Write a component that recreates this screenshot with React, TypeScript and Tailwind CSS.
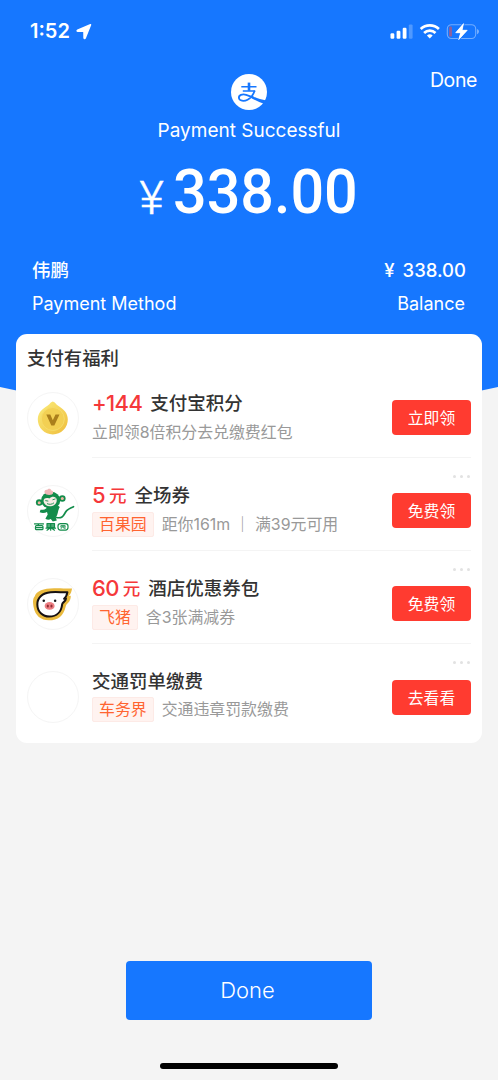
import type { ReactNode } from "react";

function AlipayLogo() {
  return (
    <svg width="36" height="36" viewBox="0 0 36 36" fill="none">
      <circle cx="18" cy="18" r="18" fill="#fff" />
      <g stroke="#1677ff">
        <path d="M18 8.600v8.200" strokeWidth="2.600" />
        <path d="M10.300 12.800h15.200M11.800 17h12.400" strokeWidth="1.600" />
        <path d="M23.600 16.800c-1.300 4.200-4 7.300-7 8.900-3.600 1.900-8.300 1.400-8.700-1.700-.3-2.900 3.300-4.200 7.200-3.200 3 .8 5.200 1.900 8 3.100" strokeWidth="1.800" />
      </g>
      <path d="M21 21.900c4.500 2.300 9 3.600 14.500 4.700-.5 1.400-.9 2-1.800 3.300-5-1.600-9.200-3.700-14-6.200z" fill="#1677ff" />
    </svg>
  );
}

function StatusIcons() {
  return (
    <svg width="90" height="20" viewBox="0 0 90 20" fill="none">
      <rect x="0.5" y="12.3" width="3.8" height="5.4" rx="1.2" fill="#fff" />
      <rect x="6.6" y="9.8" width="3.8" height="7.9" rx="1.2" fill="#fff" />
      <rect x="12.7" y="6.8" width="3.8" height="10.9" rx="1.2" fill="#fff" />
      <rect x="18.8" y="3.4" width="3.8" height="14.3" rx="1.2" fill="#fff" opacity="0.25" />
      <g stroke="#fff" strokeWidth="2.7">
        <path d="M30.700 8a13 13 0 0 1 18.200 0" />
        <path d="M34.100 12a8.200 8.200 0 0 1 11.400 0" />
      </g>
      <path d="M36.900 14.500a4.300 4.300 0 0 1 5.800 0L39.800 17.500z" fill="#fff" />
      <rect x="57.3" y="3.7" width="28.4" height="13.8" rx="4.2" stroke="#fff" strokeOpacity="0.4" strokeWidth="1.1" />
      <path d="M87.2 8v5.2c1-.4 1.6-1.4 1.6-2.6s-.6-2.2-1.6-2.6z" fill="#fff" opacity="0.5" />
      <rect x="59" y="5.6" width="3" height="10" rx="1.2" fill="#8a619f" />
      <path d="M73.600 2.500 65.600 11.800h5L68.600 18.800 77.300 9.200h-5.200z" fill="#fff" stroke="#1677ff" strokeWidth="2" strokeLinejoin="round" paintOrder="stroke" />
      <path d="M73.600 2.500 65.600 11.800h5L68.600 18.800 77.300 9.200h-5.200z" fill="#fff" stroke="#fff" strokeWidth="0.500" strokeLinejoin="round" />
    </svg>
  );
}

function CoinLogo() {
  return (
    <svg width="50" height="50" viewBox="0 0 50 50">
      <defs>
        <linearGradient id="coin" x1="0" y1="0" x2="1" y2="1">
          <stop offset="0" stopColor="#fbed7c" />
          <stop offset="1" stopColor="#efbd3c" />
        </linearGradient>
      </defs>
      <path d="M24.800 8.500c1.600 0 2.700 2.300 5 4C36 16.500 39.800 20 39.800 26.500a15 15 0 0 1-30 0C9.800 20 13.500 16.500 19.800 12.500c2.300-1.700 3.400-4 5-4z" fill="url(#coin)" />
      <circle cx="24.800" cy="26" r="11.500" fill="#f3d053" stroke="#f6dc6a" strokeWidth="1" />
      <path d="M18.300 21.500h4l2.500 5.800 2.700-5.800h4l-5.200 10.900h-3z" fill="#ab7f1c" />
    </svg>
  );
}

function MonkeyLogo() {
  return (
    <svg width="50" height="50" viewBox="1 1 50 50">
      <g fill="#138c4b">
        <circle cx="12.200" cy="17.500" r="3.300" />
        <circle cx="35.300" cy="13.500" r="3.300" />
        <ellipse cx="23.700" cy="15.200" rx="9.600" ry="8.500" />
        <path d="M20 22.500c-1 2-4 2.500-6.500 2.300l-.8 2.400c3 1.300 5.300.6 7.300-.2l.7 2.500-2.300 4.200c2 1.400 3.600 1.500 5.400.4l2 2.400 4-1-1-3c2.500-3 1.700-7 4-10.500l-2.500-2z" />
      </g>
      <path d="M29.500 32.500c7.500 1.500 7-3.500 10.200-6.800 2.300-2.200 4-2.500 6.800-4" fill="none" stroke="#138c4b" strokeWidth="1.700" strokeLinecap="round" />
      <circle cx="12.200" cy="17.700" r="1.500" fill="#efb4a2" />
      <circle cx="35.300" cy="13.500" r="1.500" fill="#efb4a2" />
      <path d="M16.600 16.800c-.5-3.600 2.800-4.300 5.700-3.300 2.500-2.700 6.700-2.500 7.400.8.400 3.900-1.900 6.500-5.700 6.900-3.900.4-6.800-1.500-7.400-4.400z" fill="#f7ece5" />
      <path d="M18.300 15.600l3 .5M25.500 14.800l3-.9M20 18.600c2.500 1.200 5 .8 7-.8" stroke="#138c4b" strokeWidth="0.900" fill="none" />
      <path d="M17.500 7.500c-.5-2 1.500-3 2.600-2.500 1-2 4-1.500 4.200.5 2-.2 2.700 3 .6 4-2 .8-6 .9-7.400-2z" fill="#efb7b8" />
      <g stroke="#138c4b" strokeWidth="1.200" fill="none" strokeLinejoin="round" strokeLinecap="round">
        <path d="M7.500 38.900h9M11.800 39l-1 1.600M9.300 40.700h5.700q1 0 1 1v2q0 1-1 1H9.500q-1 0-1-1v-2q0-1 .8-1zM9 42.700h6.500" />
        <path d="M20 38.600h7.500v3.300H20zM20 40.200h7.500M23.700 38.600v6.600M19 43.200h9.500M22.500 43.500l-2.500 1.700M25 43.500l2.500 1.700" />
        <rect x="31" y="38.600" width="10" height="6.500" rx="2.500" />
        <path d="M34 40.400h4M33.500 41.800h5M35.200 42l-1 1.500M36.800 42v1.200h1.500" strokeWidth="0.900" />
      </g>
    </svg>
  );
}

function PigLogo() {
  return (
    <svg width="50" height="50" viewBox="0 0 52 52">
      <path d="M45.800 9.800C41 10.300 36 9.500 27 9.700 16 9.700 9 12.500 6.900 18.200 4.500 21 5.200 25.500 6 30c1.500 8 7.500 13 15.500 13 10 0 15.500-5 17.700-14.500 1.200-4 5.200-3.700 5.300-11l-2 .3c2.200-2.800 2.800-5 3.300-8z" fill="#e9b93d" />
      <path d="M41 13.700c-5 .7-9.500-.7-17.500.1C14.500 14.500 9.600 20 9.700 26.500c.1 7.500 5.500 12.600 12.500 12.600 7.800 0 12.500-5.300 13.300-12.800.3-2.300 3.500-2.300 4-6l-2 .2c2.400-1.800 3-4 3.500-6.800z" fill="#fff" stroke="#161112" strokeWidth="2.100" strokeLinejoin="round" />
      <circle cx="16.400" cy="22.500" r="1.300" fill="#17191b" />
      <circle cx="28.200" cy="22.500" r="1.300" fill="#17191b" />
      <ellipse cx="22.500" cy="28" rx="5.200" ry="4" fill="#ed7f83" />
      <ellipse cx="20.600" cy="28" rx="1.100" ry="1.600" fill="#902d35" />
      <ellipse cx="24.400" cy="28" rx="1.100" ry="1.600" fill="#902d35" />
    </svg>
  );
}

type Offer = {
  logo?: ReactNode;
  value?: string;
  unit?: string;
  title: string;
  tag?: string;
  note: string;
  action: string;
  menu: boolean;
};

const offers: Offer[] = [
  { logo: <CoinLogo />, value: "+144", title: "支付宝积分", note: "立即领8倍积分去兑缴费红包", action: "立即领", menu: false },
  { logo: <MonkeyLogo />, value: "5", unit: "元", title: "全场券", tag: "百果园", note: "距你161m ｜ 满39元可用", action: "免费领", menu: true },
  { logo: <PigLogo />, value: "60", unit: "元", title: "酒店优惠券包", tag: "飞猪", note: "含3张满减券", action: "免费领", menu: true },
  { title: "交通罚单缴费", tag: "车务界", note: "交通违章罚款缴费", action: "去看看", menu: true },
];

function OfferRow({ offer, last }: { offer: Offer; last: boolean }) {
  return (
    <div className="flex h-[93px] pl-[11px] pr-[11px]">
      <div className="mt-[27px] flex size-[52px] shrink-0 items-center justify-center rounded-full border border-[#f5f5f5]">
        {offer.logo}
      </div>
      <div className={`relative ml-[13px] flex flex-1 justify-between border-b ${last ? "border-transparent" : "border-[#f4f4f4]"}`}>
        <div className={offer.tag ? "pt-6" : "pt-[25px]"}>
          <div className="flex h-7 items-center whitespace-nowrap text-[18.500px] font-medium text-[#333]">
            {offer.value && <span className="-mt-px text-[22px] tracking-[-0.600px] text-[#f5383a]">{offer.value}</span>}
            {offer.unit && <span className="ml-1 text-[17.500px] text-[#f5383a]">{offer.unit}</span>}
            <span className={offer.value ? "ml-2" : ""}>{offer.title}</span>
          </div>
          <div className={`flex h-[25px] items-center whitespace-nowrap text-[15.900px] text-[#999] ${offer.tag && last ? "mt-px" : "mt-[2px]"}`}>
            {offer.tag && (
              <span className="mr-2 flex h-[25px] items-center rounded-[2px] border border-[#fdeae6] bg-[#fff3f0] px-[6px] text-[#ff6430]">
                {offer.tag}
              </span>
            )}
            <span>{offer.note}</span>
          </div>
        </div>
        <button className={`h-[35px] w-[79px] rounded-[4px] bg-[#ff3b30] pt-[2px] text-[15.800px] text-white ${last ? "mt-9" : "mt-[35px]"}`}>{offer.action}</button>
        {offer.menu && (
          <div className="absolute right-[1px] top-[17px] flex gap-1">
            <i className="size-[3px] rounded-full bg-[#e2e2e2]" />
            <i className="size-[3px] rounded-full bg-[#e2e2e2]" />
            <i className="size-[3px] rounded-full bg-[#e2e2e2]" />
          </div>
        )}
      </div>
    </div>
  );
}

export default function App() {
  return (
    <div className="relative flex h-[1080px] w-[498px] flex-col overflow-hidden bg-[#f4f4f4] font-['Inter','Noto_Sans_CJK_SC',sans-serif]">
      <div className="absolute bottom-[666px] left-1/2 size-[2324px] -translate-x-1/2 rounded-full bg-[#1677ff]" />
      <div className="absolute inset-x-0 top-0 h-[387px] bg-[#1677ff]" />
      <header className="relative flex h-[334px] flex-col text-white">
        <div className="flex h-[62px] items-center justify-between pl-[30px] pr-[18px]">
          <div className="flex items-center gap-[6px]">
            <span className="text-[20px] font-semibold">1:52</span>
            <svg width="17" height="17" viewBox="0 0 17 17">
              <path d="M14.500 1.700 1.600 7.200c-.7.300-.5 1 .2 1l6.200.1.100 6.400c0 .8.800.9 1.100.2z" fill="#fff" stroke="#fff" strokeWidth="1.600" strokeLinejoin="round" />
            </svg>
          </div>
          <StatusIcons />
        </div>
        <div className="flex h-9 items-center justify-end pr-[21px] pt-[2px] text-[19.500px] tracking-[-0.400px]">Done</div>
        <div className="-mt-6 flex h-9 justify-center">
          <AlipayLogo />
        </div>
        <div className="mt-[7px] h-7 text-center text-[19px] leading-7">Payment Successful</div>
        <div className="mt-3 flex h-[70px] items-end justify-center pr-[3px]">
          <span className="mr-[5px] w-[28px] font-['Roboto'] text-[47px] leading-[58px]">
            <span className="inline-block origin-left font-light [-webkit-text-stroke:0.500px_white]">¥</span>
          </span>
          <span className="w-[183px] font-['Roboto'] text-[62px] font-medium leading-[70px]">
            <span className="inline-block origin-left scale-x-[0.955]">338.00</span>
          </span>
        </div>
        <div className="mt-[27px] flex h-[33px] items-center justify-between px-8 text-[18.500px] font-medium">
          <span>伟鹏</span>
          <span className="[word-spacing:3px]">¥ 338.00</span>
        </div>
        <div className="flex h-[33px] items-center justify-between pl-8 pr-[33px] text-[18px]">
          <span>Payment Method</span>
          <span>Balance</span>
        </div>
      </header>
      <main className="relative mx-4 h-[409px] rounded-[11px] bg-white">
        <h2 className="h-[31px] pl-[11px] pt-[10px] text-[18.400px] font-medium leading-7 text-[#333]">支付有福利</h2>
        {offers.map((offer, i) => (
          <OfferRow key={offer.title} offer={offer} last={i === offers.length - 1} />
        ))}
      </main>
      <button className="relative mx-auto mt-[218px] h-[59px] w-[246px] rounded-[4px] bg-[#1677ff] pr-[3px] text-[22px] font-light text-white">Done</button>
      <div className="relative mx-auto mt-[43px] h-[6px] w-[178px] rounded-full bg-black" />
    </div>
  );
}
